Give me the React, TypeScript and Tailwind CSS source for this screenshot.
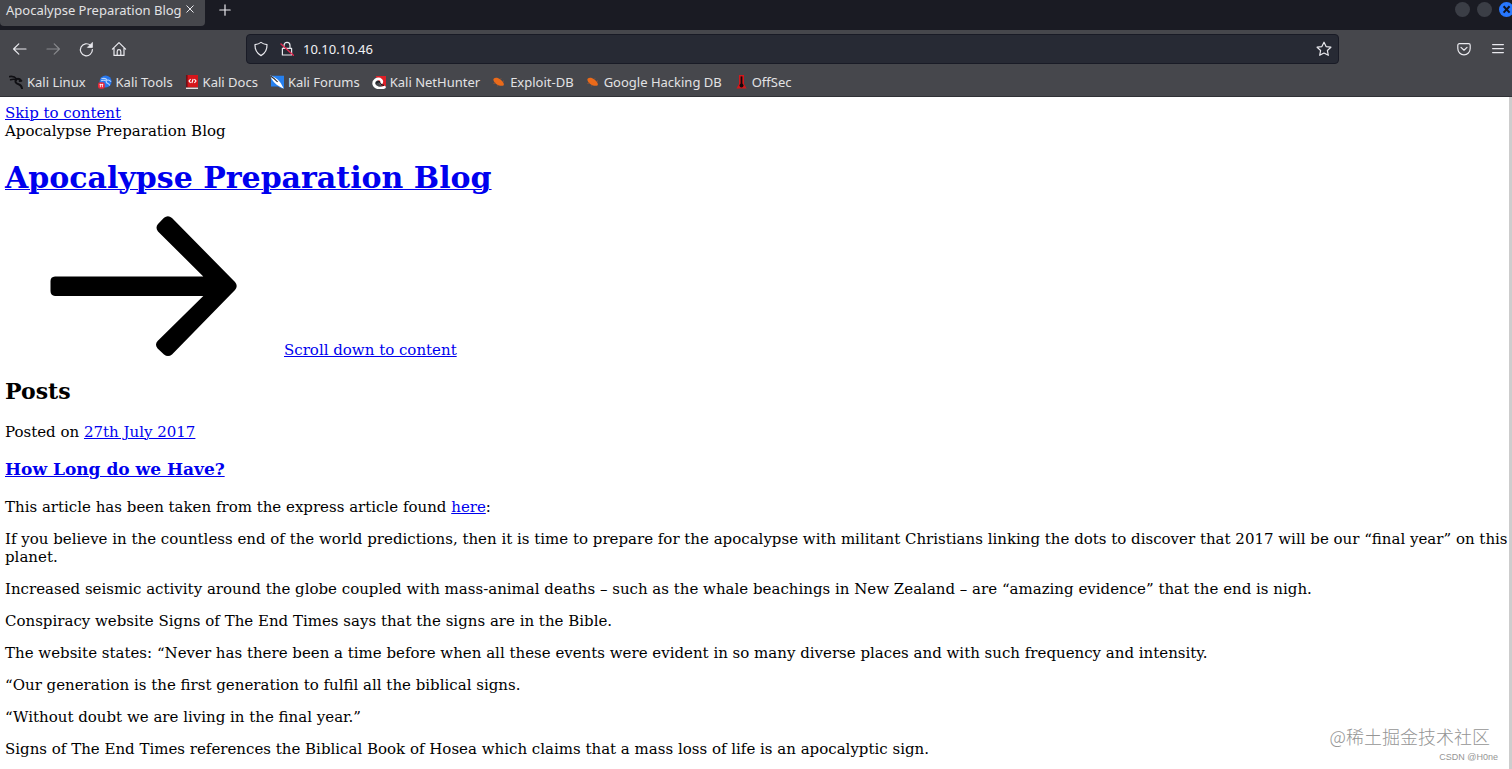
import React from "react";

interface BookmarkItem {
  label: string;
  icon: React.ReactNode;
}

const Dragon = ({ color }: { color: string }) => (
  <g fill="none" stroke={color} strokeLinecap="round" strokeLinejoin="round">
    <path d="M0.6 1.6 C3 1.2 6 2 7.6 4" strokeWidth="1.8" />
    <path d="M1.6 4.8 C4 4 6 4.2 7.4 5" strokeWidth="1.6" />
    <path d="M7.2 4.2 C9 3.4 11 4 12.4 5.8 L10.6 6" strokeWidth="1.9" />
    <path d="M7.2 4.6 C5.6 7 7 8.6 9.6 9.2 C11.8 9.8 12.6 11 13 13.4" strokeWidth="2" />
  </g>
);

const Bug = () => (
  <g>
    <path d="M1.4 4 C3 2.2 5.6 2.4 8.4 4.4 C11 6.2 12.4 8.6 11.8 10.2 C10 11.2 6.4 10.8 4.2 9 C2.2 7.4 1.2 5.8 1.4 4 Z" fill="#ea6a1a" />
    <path d="M1.4 8.4 L3.6 8 M5.4 11.4 L6.2 10.2 M9 3.4 L8.4 4.6 M12 5.8 L10.6 6.6" stroke="#a9552b" strokeWidth="0.8" />
  </g>
);

const bookmarks: BookmarkItem[] = [
  { label: "Kali Linux", icon: <Dragon color="#101014" /> },
  {
    label: "Kali Tools",
    icon: (
      <>
        <circle cx="7.6" cy="6.6" r="6" fill="#2777ee" />
        <path d="M3.4 3.8 C6 3 8.4 3.8 9.2 5.2 C10.6 4.8 12 5.4 13 6.8 M9.2 5.2 C7.4 6.8 8.4 8 10 8.4 C11.2 8.8 11.6 9.4 11.6 10.6 M3 5.8 C5 5 7 5.2 8.2 6" fill="none" stroke="#b7d3fb" strokeWidth="1.1" />
        <rect x="0" y="7.2" width="6.8" height="6.6" rx="2.2" fill="#e8293a" />
        <path d="M2.4 8.8 V12.2 M4.4 8.8 V12.2 M1.6 9.6 H5.2" stroke="#fff" strokeWidth="0.8" />
      </>
    ),
  },
  {
    label: "Kali Docs",
    icon: (
      <>
        <rect x="1" y="0" width="12" height="12.4" fill="#d5161b" />
        <rect x="1" y="0" width="1.6" height="12.4" fill="#6d1118" />
        <rect x="1" y="12.6" width="12" height="1.4" fill="#e4e0df" />
        <path d="M5.6 4.2 L4 6 L5.6 7.8 M9.4 4.2 L11 6 L9.4 7.8 M8.2 4 L6.8 8" fill="none" stroke="#fff" strokeWidth="1.1" />
      </>
    ),
  },
  {
    label: "Kali Forums",
    icon: (
      <>
        <path d="M1 0.8 H14 V13.2 H11 L8 11.4 H1 Z" fill="#2580ef" />
        <path d="M0 0.6 C4.4 1.6 8.6 4.8 11 8.6 L13.8 13.8 L9.6 11.6 C5.6 9.8 2 6 0 0.6 Z" fill="#fff" />
        <path d="M0.4 1 C4 3.2 6 5 7.6 7" fill="none" stroke="#26282e" strokeWidth="1.2" />
      </>
    ),
  },
  {
    label: "Kali NetHunter",
    icon: (
      <>
        <path d="M3.6 1 H14 V11 L11 13 Z" fill="#de2027" />
        <path d="M12.4 12.2 C8.6 14 2.8 13 1.8 9.2 C1.2 5.6 5 3.2 8 4.2 C10 5 10.2 7 9 8.4" fill="none" stroke="#fff" strokeWidth="2.8" strokeLinecap="round" />
        <path d="M4.4 8.4 C5 6.4 7.4 6 7.8 7.4 C8 8.6 9.6 10 12 10.4" fill="none" stroke="#17181d" strokeWidth="1.2" />
      </>
    ),
  },
  { label: "Exploit-DB", icon: <Bug /> },
  { label: "Google Hacking DB", icon: <Bug /> },
  {
    label: "OffSec",
    icon: (
      <>
        <path d="M5 0 H10 V9 L12.6 13.6 H2.4 L5 9 Z" fill="#d3181c" />
        <path d="M7.5 1.4 V9" stroke="#14090b" strokeWidth="1.8" />
        <circle cx="7.5" cy="10.6" r="2" fill="#14090b" />
      </>
    ),
  },
];

const paragraphs = [
  "If you believe in the countless end of the world predictions, then it is time to prepare for the apocalypse with militant Christians linking the dots to discover that 2017 will be our “final year” on this planet.",
  "Increased seismic activity around the globe coupled with mass-animal deaths – such as the whale beachings in New Zealand – are “amazing evidence” that the end is nigh.",
  "Conspiracy website Signs of The End Times says that the signs are in the Bible.",
  "The website states: “Never has there been a time before when all these events were evident in so many diverse places and with such frequency and intensity.",
  "“Our generation is the first generation to fulfil all the biblical signs.",
  "“Without doubt we are living in the final year.”",
  "Signs of The End Times references the Biblical Book of Hosea which claims that a mass loss of life is an apocalyptic sign.",
];

const ToolbarIcon = ({ children, className = "" }: { children: React.ReactNode; className?: string }) => (
  <svg
    viewBox="0 0 16 16"
    className={`size-4 ${className}`}
    fill="none"
    stroke="currentColor"
    strokeWidth="1.2"
    strokeLinecap="round"
    strokeLinejoin="round"
    aria-hidden="true"
  >
    {children}
  </svg>
);

const TabStrip = () => (
  <div className="flex h-[30px] shrink-0 items-start bg-[#1a1b23] text-[#e9e9ee]">
    <div className="flex h-[26px] w-[205px] items-start rounded-b bg-[#46474c] pl-1.5">
      <span className="w-[179px] whitespace-nowrap text-[13px] leading-5 text-[#e2e2e4]">Apocalypse Preparation Blog</span>
      <button type="button" aria-label="Close tab" className="mt-1">
        <svg viewBox="0 0 10 10" className="size-2.5" fill="none" stroke="currentColor" strokeWidth="1">
          <path d="M1.5 1.5 L8.5 8.5 M8.5 1.5 L1.5 8.5" />
        </svg>
      </button>
    </div>
    <button type="button" aria-label="New tab" className="ml-3 mt-0.5">
      <ToolbarIcon>
        <path d="M8 2.8 V13.2 M2.8 8 H13.2" />
      </ToolbarIcon>
    </button>
    <div className="-mr-0.5 ml-auto mt-0.5 flex gap-[7px]">
      <button type="button" aria-label="Minimize" className="size-[15px] rounded-full bg-[#3b3e46]" />
      <button type="button" aria-label="Maximize" className="size-[15px] rounded-full bg-[#3b3e46]" />
      <button type="button" aria-label="Close window" className="size-[15px] rounded-full bg-[#2777ff] text-[#101420]">
        <svg viewBox="0 0 15 15" className="size-[15px]" fill="none" stroke="currentColor" strokeWidth="2">
          <path d="M4.6 4.2 L10.6 10.6 M10.6 4.2 L4.6 10.6" />
        </svg>
      </button>
    </div>
  </div>
);

const Toolbar = () => (
  <div className="flex h-[37px] shrink-0 items-center text-[#e9e9ee]">
    <div className="flex w-[246px] items-center gap-[17px] pl-3">
      <button type="button" aria-label="Back">
        <ToolbarIcon>
          <path d="M14 8 H1.6 M6.8 2.8 L1.6 8 L6.8 13.2" />
        </ToolbarIcon>
      </button>
      <button type="button" aria-label="Forward" className="text-[#88898d]">
        <ToolbarIcon>
          <path d="M2 8 H14.4 M9.2 2.8 L14.4 8 L9.2 13.2" />
        </ToolbarIcon>
      </button>
      <button type="button" aria-label="Reload">
        <ToolbarIcon>
          <path d="M12.4 4.3 A6 6 0 1 0 14.4 8.6" />
          <path d="M14.4 1.8 V6.4 H9.8 Z" fill="currentColor" strokeWidth="0.8" />
        </ToolbarIcon>
      </button>
      <button type="button" aria-label="Home">
        <ToolbarIcon>
          <path d="M1.4 8.2 L8 1.6 L14.6 8.2 M3 7 V14.4 H13 V7 M6.2 14.2 V10.4 A1.8 1.8 0 0 1 9.8 10.4 V14.2" />
        </ToolbarIcon>
      </button>
    </div>
    <div className="flex h-[30px] min-w-0 flex-1 items-center rounded border border-[#191b26] bg-[#272a34] px-1.5">
      <ToolbarIcon>
        <path d="M8 1.4 C9.8 2.8 12 3.4 14 3.6 C14.2 8.4 12.6 12.2 8 14.6 C3.4 12.2 1.8 8.4 2 3.6 C4 3.4 6.2 2.8 8 1.4 Z" />
      </ToolbarIcon>
      <ToolbarIcon className="ml-2.5">
        <path d="M5 6.8 V4.4 A3 3 0 0 1 11 4.4 V6.8 M3.4 7.4 H12.6 V14 H3.4 Z" />
        <path d="M2 3 L14.4 14.2" stroke="#e22850" strokeWidth="1.4" />
      </ToolbarIcon>
      <input
        type="text"
        aria-label="Address"
        defaultValue="10.10.10.46"
        className="ml-2 min-w-0 flex-1 bg-transparent text-[13px] leading-5 text-[#f2f2f5] outline-none"
      />
      <button type="button" aria-label="Bookmark this page">
        <ToolbarIcon>
          <path d="M8 1.2 L10.1 5.6 L14.9 6.2 L11.4 9.5 L12.3 14.3 L8 12 L3.7 14.3 L4.6 9.5 L1.1 6.2 L5.9 5.6 Z" />
        </ToolbarIcon>
      </button>
    </div>
    <div className="flex w-[173px] items-center justify-end gap-[18px] pr-1.5">
      <button type="button" aria-label="Save to Pocket">
        <ToolbarIcon>
          <path d="M3.4 2.6 H12.6 A1.6 1.6 0 0 1 14.2 4.2 V7.6 A6.2 6.2 0 0 1 1.8 7.6 V4.2 A1.6 1.6 0 0 1 3.4 2.6 Z M5 6.4 L8 9.2 L11 6.4" />
        </ToolbarIcon>
      </button>
      <button type="button" aria-label="Open application menu">
        <ToolbarIcon>
          <path d="M2.6 3.6 H13.4 M2.6 7.6 H13.4 M2.6 11.6 H13.4" />
        </ToolbarIcon>
      </button>
    </div>
  </div>
);

const BookmarksBar = () => (
  <nav className="flex h-[30px] shrink-0 items-center gap-3 border-b border-[#303136] pl-[9px] text-[13px] leading-5 text-[#e2e2e4]">
    {bookmarks.map(({ label, icon }) => (
      <a key={label} href="#" className="flex items-center gap-1 whitespace-nowrap">
        <svg viewBox="0 0 14 14" className="size-3.5" aria-hidden="true">
          {icon}
        </svg>
        {label}
      </a>
    ))}
  </nav>
);

const PageLink = ({ children }: { children: React.ReactNode }) => (
  <a href="#" className="text-[#0000ee] underline decoration-1">
    {children}
  </a>
);

export default function App() {
  return (
    <div className="relative flex h-screen flex-col overflow-hidden bg-[#46474c] font-['Noto_Sans',sans-serif]">
      <TabStrip />
      <Toolbar />
      <BookmarksBar />

      <div className="flex min-h-0 flex-1 bg-white">
        <main className="min-w-0 flex-1 overflow-hidden pl-[5px] pt-[7px] font-['DejaVu_Serif',serif] text-[15px] leading-[18px] text-black">
          <div>
            <PageLink>Skip to content</PageLink>
          </div>
          <header>
            <p>Apocalypse Preparation Blog</p>
            <h1 className="mt-5 text-[30px] font-bold leading-9">
              <PageLink>Apocalypse Preparation Blog</PageLink>
            </h1>
            <a href="#content" className="mt-5 flex items-baseline text-[#0000ee]">
              <svg viewBox="0 0 279 139" className="h-[139px] w-[279px] overflow-visible" aria-hidden="true">
                <path
                  fill="#000"
                  d="M159 1.8 Q163 -1.4 167 2 L230 66 Q233.4 70 230 74 L167 138.4 Q163 141.4 159 138.4 L152.6 132.4 Q149.4 128.6 152.6 125 L198.3 80 H50 Q45.5 79.6 45.5 75 V65 Q45.5 60.8 50 60.5 H198.3 L153 15.4 Q150 11.6 153 8 Z"
                />
              </svg>
              <span className="underline decoration-1">Scroll down to content</span>
            </a>
          </header>

          <section id="content">
            <h2 className="mt-[18px] text-[22px] font-bold leading-7">Posts</h2>
            <p className="mt-[18px]">
              Posted on <PageLink>27th July 2017</PageLink>
            </p>
            <h3 className="mt-[18px] text-[17px] font-bold leading-5">
              <PageLink>How Long do we Have?</PageLink>
            </h3>
            <div className="mt-[19px] space-y-[14px]">
              <p>
                This article has been taken from the express article found <PageLink>here</PageLink>:
              </p>
              {paragraphs.map((text) => (
                <p key={text}>{text}</p>
              ))}
            </div>
          </section>
        </main>
        <div className="w-[3px] bg-[#cdcdcd]" />
      </div>

      <div className="pointer-events-none absolute bottom-1.5 right-3.5 flex flex-col items-end text-[#959595]">
        <span className="mb-[3px] mr-2 font-['Noto_Sans_CJK_SC',sans-serif] text-[18px] font-light leading-6">@稀土掘金技术社区</span>
        <span className="font-['Liberation_Sans',sans-serif] text-[9px] leading-3">CSDN @H0ne</span>
      </div>
    </div>
  );
}
